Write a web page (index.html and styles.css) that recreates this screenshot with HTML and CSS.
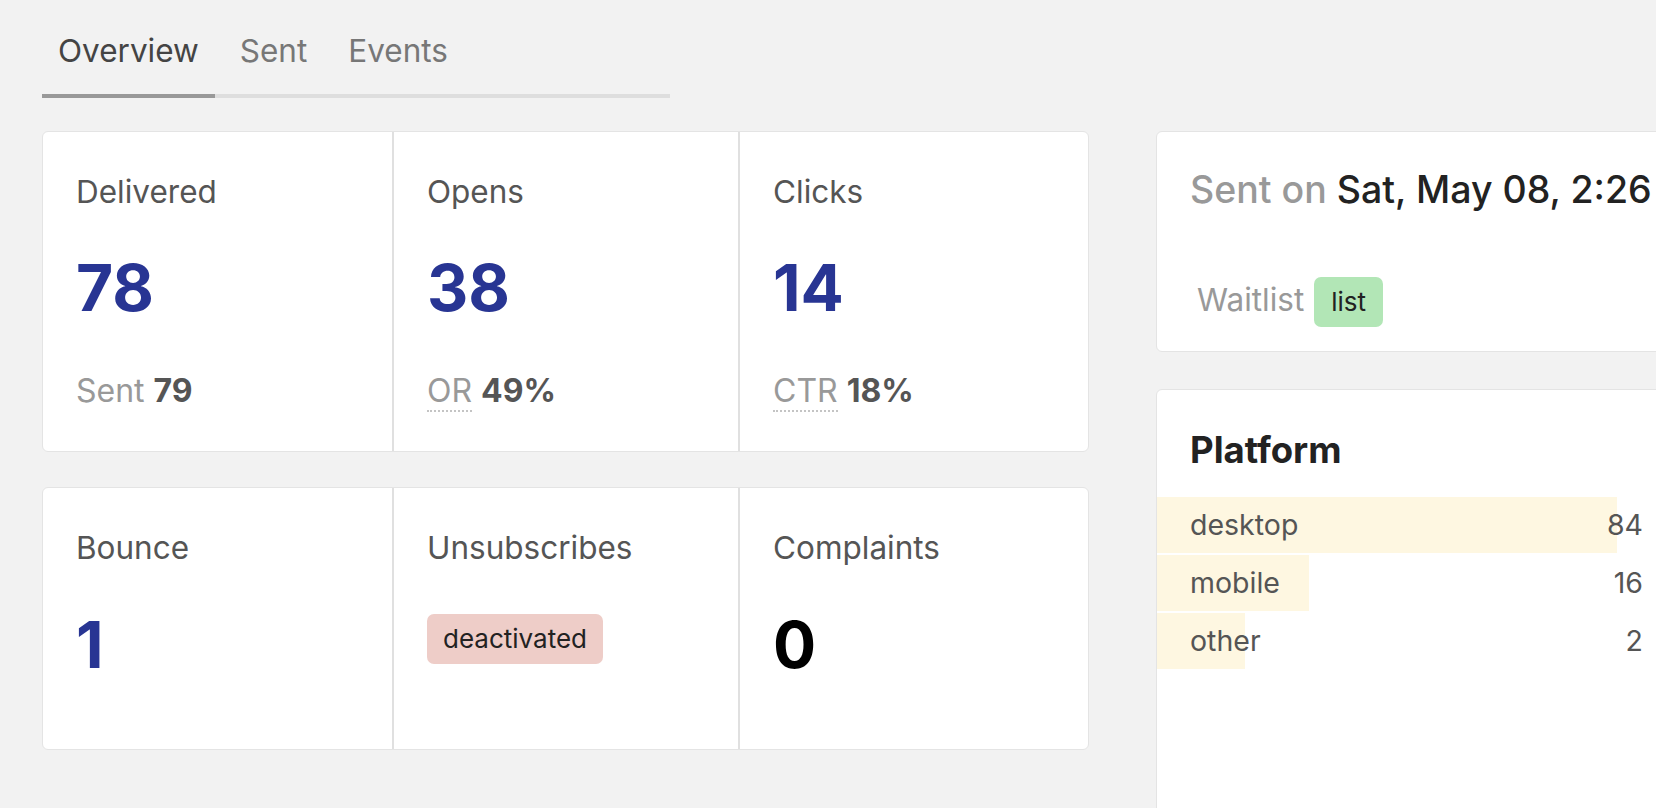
FILE: index.html
```html
<!DOCTYPE html>
<html lang="en">
<head>
<meta charset="utf-8">
<title>Campaign overview</title>
<link rel="stylesheet" href="styles.css">
</head>
<body>
<div class="page">
  <nav class="tabs">
    <a class="tab active">Overview</a>
    <a class="tab">Sent</a>
    <a class="tab">Events</a>
  </nav>

  <div class="main">
    <div class="left">
      <section class="stat-group">
        <div class="stat">
          <div class="stat-label">Delivered</div>
          <div class="stat-value">78</div>
          <div class="stat-sub">Sent <b>79</b></div>
        </div>
        <div class="stat">
          <div class="stat-label">Opens</div>
          <div class="stat-value">38</div>
          <div class="stat-sub"><span class="abbr">OR</span> <b>49%</b></div>
        </div>
        <div class="stat">
          <div class="stat-label">Clicks</div>
          <div class="stat-value">14</div>
          <div class="stat-sub"><span class="abbr">CTR</span> <b>18%</b></div>
        </div>
      </section>

      <section class="stat-group lower">
        <div class="stat">
          <div class="stat-label">Bounce</div>
          <div class="stat-value">1</div>
        </div>
        <div class="stat">
          <div class="stat-label">Unsubscribes</div>
          <div class="stat-badge"><span class="badge badge-red">deactivated</span></div>
        </div>
        <div class="stat">
          <div class="stat-label">Complaints</div>
          <div class="stat-value zero">0</div>
        </div>
      </section>
    </div>

    <div class="right">
      <section class="card sent-card">
        <div class="sent-title"><span class="muted">Sent on</span> Sat, May 08, 2:26</div>
        <div class="list-row">
          <span class="list-name">Waitlist</span>
          <span class="badge badge-green">list</span>
        </div>
      </section>

      <section class="card platform-card">
        <h2 class="card-title">Platform</h2>
        <div class="bar-row" style="--w:460px"><span>desktop</span><span>84</span></div>
        <div class="bar-row" style="--w:152px"><span>mobile</span><span>16</span></div>
        <div class="bar-row" style="--w:88px"><span>other</span><span>2</span></div>
      </section>
    </div>
  </div>
</div>
</body>
</html>
```

FILE: styles.css
```css
html, body {
  margin: 0;
  padding: 0;
}

body {
  background: #f2f2f2;
  font-family: Inter, "Noto Sans", "Liberation Sans", sans-serif;
  color: #555;
  overflow: hidden;
}

.page {
  padding: 33px 0 0 42px;
}

/* Tabs */
.tabs {
  display: flex;
  gap: 9px;
  width: 628px;
  border-bottom: 4px solid #dedede;
}

.tab {
  font-size: 31.5px;
  line-height: 36px;
  color: #777;
  padding: 0 16px 25px;
  margin-bottom: -4px;
  border-bottom: 4px solid transparent;
}

.tab.active {
  color: #444;
  border-bottom-color: #999;
}

/* Main layout */
.main {
  display: grid;
  grid-template-columns: 1047px 521px;
  column-gap: 67px;
  margin-top: 33px;
  align-items: start;
}

.left {
  display: flex;
  flex-direction: column;
  gap: 35px;
}

.stat-group {
  display: grid;
  grid-template-columns: 349px 346px 1fr;
  background: #fff;
  border: 1px solid #e4e4e4;
  border-radius: 6px;
}

.stat {
  padding: 42px 33px 42px;
}

.stat + .stat {
  border-left: 2px solid #e0e0e0;
}

.stat-group.lower .stat {
  padding-bottom: 72px;
}

.stat-label {
  font-size: 31.5px;
  line-height: 36px;
  color: #555;
}

.stat-value {
  font-size: 64px;
  line-height: 64px;
  font-weight: 700;
  color: #283593;
  margin-top: 46px;
}

.stat-group.lower .stat-value {
  margin-top: 47px;
}

.stat-value.zero {
  color: #000;
}

.stat-badge {
  margin-top: 48px;
}

.stat-sub {
  font-size: 32px;
  line-height: 36px;
  color: #999;
  margin-top: 53px;
}

.stat-sub b {
  color: #555;
  font-weight: 700;
}

.abbr {
  border-bottom: 2px dotted #c4c4c4;
}

/* Badges */
.badge {
  display: inline-block;
  font-size: 26px;
  line-height: 30px;
  padding: 10px 16px;
  border-radius: 7px;
  color: #222;
}

.badge-red {
  background: #eecdc8;
}

.badge-green {
  background: #b2e6b6;
  padding: 10px 17px;
}

/* Right column */
.right {
  display: flex;
  flex-direction: column;
  gap: 37px;
}

.card {
  background: #fff;
  border: 1px solid #e4e4e4;
  border-radius: 6px;
}

.sent-card {
  padding: 36px 33px 24px;
}

.sent-title {
  font-size: 37.5px;
  line-height: 44px;
  font-weight: 500;
  color: #222;
  white-space: nowrap;
}

.muted {
  color: #999;
}

.list-row {
  display: flex;
  align-items: baseline;
  gap: 10px;
  margin-top: 65px;
  padding-left: 7px;
}

.list-name {
  font-size: 31.5px;
  line-height: 36px;
  color: #999;
}

.platform-card {
  padding: 38px 0 0;
  min-height: 480px;
}

.card-title {
  margin: 0 0 25px;
  padding: 0 33px;
  font-size: 36.5px;
  line-height: 44px;
  font-weight: 700;
  color: #222;
}

.bar-row {
  display: flex;
  justify-content: space-between;
  align-items: center;
  height: 56px;
  margin-bottom: 2px;
  padding: 0 33px;
  font-size: 28.5px;
  line-height: 34px;
  color: #555;
  background: linear-gradient(to right, #fef7e1 var(--w), transparent var(--w));
}
```
